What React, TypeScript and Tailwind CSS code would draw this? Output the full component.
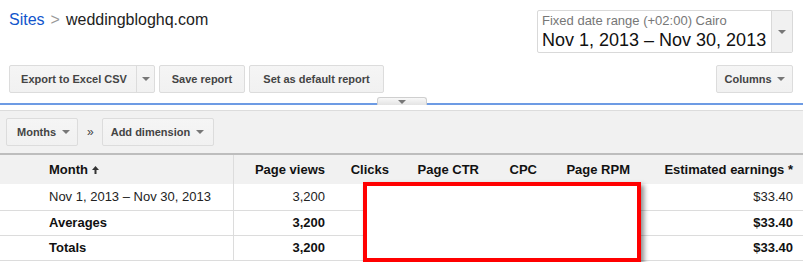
import type { ReactNode } from 'react'

const Caret = ({ className = '' }: { className?: string }) => (
  <span
    className={`inline-block h-0 w-0 border-x-[4px] border-t-[4px] border-x-transparent border-t-[#777] ${className}`}
  />
)

function Btn({ children, className = '' }: { children: ReactNode; className?: string }) {
  return (
    <div
      className={`flex h-[28px] items-center rounded-[2px] border border-[#dcdcdc] bg-gradient-to-b from-[#f5f5f5] to-[#f1f1f1] text-[11px] font-bold text-[#444] ${className}`}
    >
      {children}
    </div>
  )
}

const cols = [
  { label: 'Page views', w: 'w-[101px]' },
  { label: 'Clicks', w: 'w-[64px]' },
  { label: 'Page CTR', w: 'w-[90px]' },
  { label: 'CPC', w: 'w-[58px]' },
  { label: 'Page RPM', w: 'w-[93px]' },
  { label: 'Estimated earnings *', w: 'w-[163px]' },
]

const rows = [
  { name: 'Nov 1, 2013 – Nov 30, 2013', views: '3,200', earn: '$33.40', bold: false },
  { name: 'Averages', views: '3,200', earn: '$33.40', bold: true },
  { name: 'Totals', views: '3,200', earn: '$33.40', bold: true },
]

export default function App() {
  return (
    <div className="relative h-[262px] w-[803px] overflow-hidden bg-white font-['Liberation_Sans',Arial,sans-serif] text-[#222]">
      {/* top row */}
      <div className="flex items-start justify-between pl-[9px] pr-[10px] pt-[10px]">
        <div className="flex h-[20px] items-center text-[16px] leading-none">
          <span className="text-[#1155cc]">Sites</span>
          <span className="mx-[6px] text-[#999]">&gt;</span>
          <span>weddingbloghq.com</span>
        </div>
        <div className="flex h-[43px] w-[256px] rounded-[2px] border border-[#d9d9d9]">
          <div className="flex flex-1 flex-col overflow-hidden whitespace-nowrap pl-[4px] pt-[2px]">
            <span className="text-[13px] leading-[16px] text-[#777]">Fixed date range (+02:00) Cairo</span>
            <span className="text-[18px] leading-[22px] text-[#111]">Nov 1, 2013 – Nov 30, 2013</span>
          </div>
          <div className="flex w-[21px] items-center justify-center border-l border-[#d9d9d9] bg-[#f1f1f1]">
            <Caret />
          </div>
        </div>
      </div>

      {/* button row */}
      <div className="mt-[12px] flex items-center justify-between pl-[9px] pr-[10px]">
        <div className="flex gap-[4px]">
          <Btn className="w-[146px]">
            <span className="flex flex-1 justify-center pl-[2px]">Export to Excel CSV</span>
            <span className="flex h-full w-[18px] items-center justify-center border-l border-[#dcdcdc]">
              <Caret />
            </span>
          </Btn>
          <Btn className="w-[86px] justify-center">Save report</Btn>
          <Btn className="w-[135px] justify-center">Set as default report</Btn>
        </div>
        <Btn className="w-[77px] justify-center gap-[5px]">
          Columns <Caret />
        </Btn>
      </div>

      {/* blue divider with toggle tab */}
      <div className="mt-[4px] flex h-[8px] items-end">
        <div className="h-[2px] w-[377px] bg-[#6d9be4]" />
        <div className="flex h-[8px] w-[50px] items-start justify-center rounded-t-[3px] border border-b-0 border-[#cfcfcf] bg-gradient-to-b from-[#f8f8f8] to-[#e4e4e4] pt-[2px]">
          <Caret />
        </div>
        <div className="h-[2px] flex-1 bg-[#6d9be4]" />
      </div>

      {/* dimension toolbar */}
      <div className="mt-[5px] flex h-[43px] items-center border-t border-[#dcdcdc] bg-[#f1f1f1] pl-[6px]">
        <Btn className="w-[72px] gap-[6px] pl-[10px]">
          Months <Caret />
        </Btn>
        <span className="ml-[9px] mr-[8px] text-[12px] text-[#444]">»</span>
        <Btn className="w-[112px] gap-[6px] pl-[8px]">
          Add dimension <Caret />
        </Btn>
      </div>

      {/* table */}
      <div className="border-t-2 border-[#bdbdbd]">
        <div className="flex h-[29px] items-center bg-[#f1f1f1] text-[13px] font-bold text-[#111]">
          <div className="flex h-full w-[234px] items-center gap-[4px] border-r border-[#dcdcdc] pl-[49px]">
            Month
            <svg width="7" height="8" viewBox="0 0 7 8" className="mt-[1px]">
              <path d="M3.5 0 L7 4 H4.5 V8 H2.5 V4 H0 Z" fill="#333" />
            </svg>
          </div>
          {cols.map((c) => (
            <div key={c.label} className={`${c.w} pr-[10px] text-right`}>
              {c.label}
            </div>
          ))}
        </div>
        {rows.map((r, i) => (
          <div
            key={r.name}
            className={`flex items-center border-b border-[#dcdcdc] text-[13px] ${i === 0 ? 'h-[27px]' : 'h-[25px]'} ${r.bold ? 'font-bold text-[#111]' : 'text-[#222]'}`}
          >
            <div className="flex h-full w-[234px] items-center border-r border-[#dcdcdc] pl-[49px]">{r.name}</div>
            <div className="w-[101px] pr-[10px] text-right">{r.views}</div>
            <div className="w-[64px]" />
            <div className="w-[90px]" />
            <div className="w-[58px]" />
            <div className="w-[93px]" />
            <div className="w-[163px] pr-[10px] text-right">{r.earn}</div>
          </div>
        ))}
      </div>

      {/* redaction box */}
      <div className="absolute left-[363px] top-[182px] h-[80px] w-[278px] border-[4px] border-[#ff0000] bg-white shadow-[3px_3px_5px_rgba(0,0,0,0.45)]" />
    </div>
  )
}
